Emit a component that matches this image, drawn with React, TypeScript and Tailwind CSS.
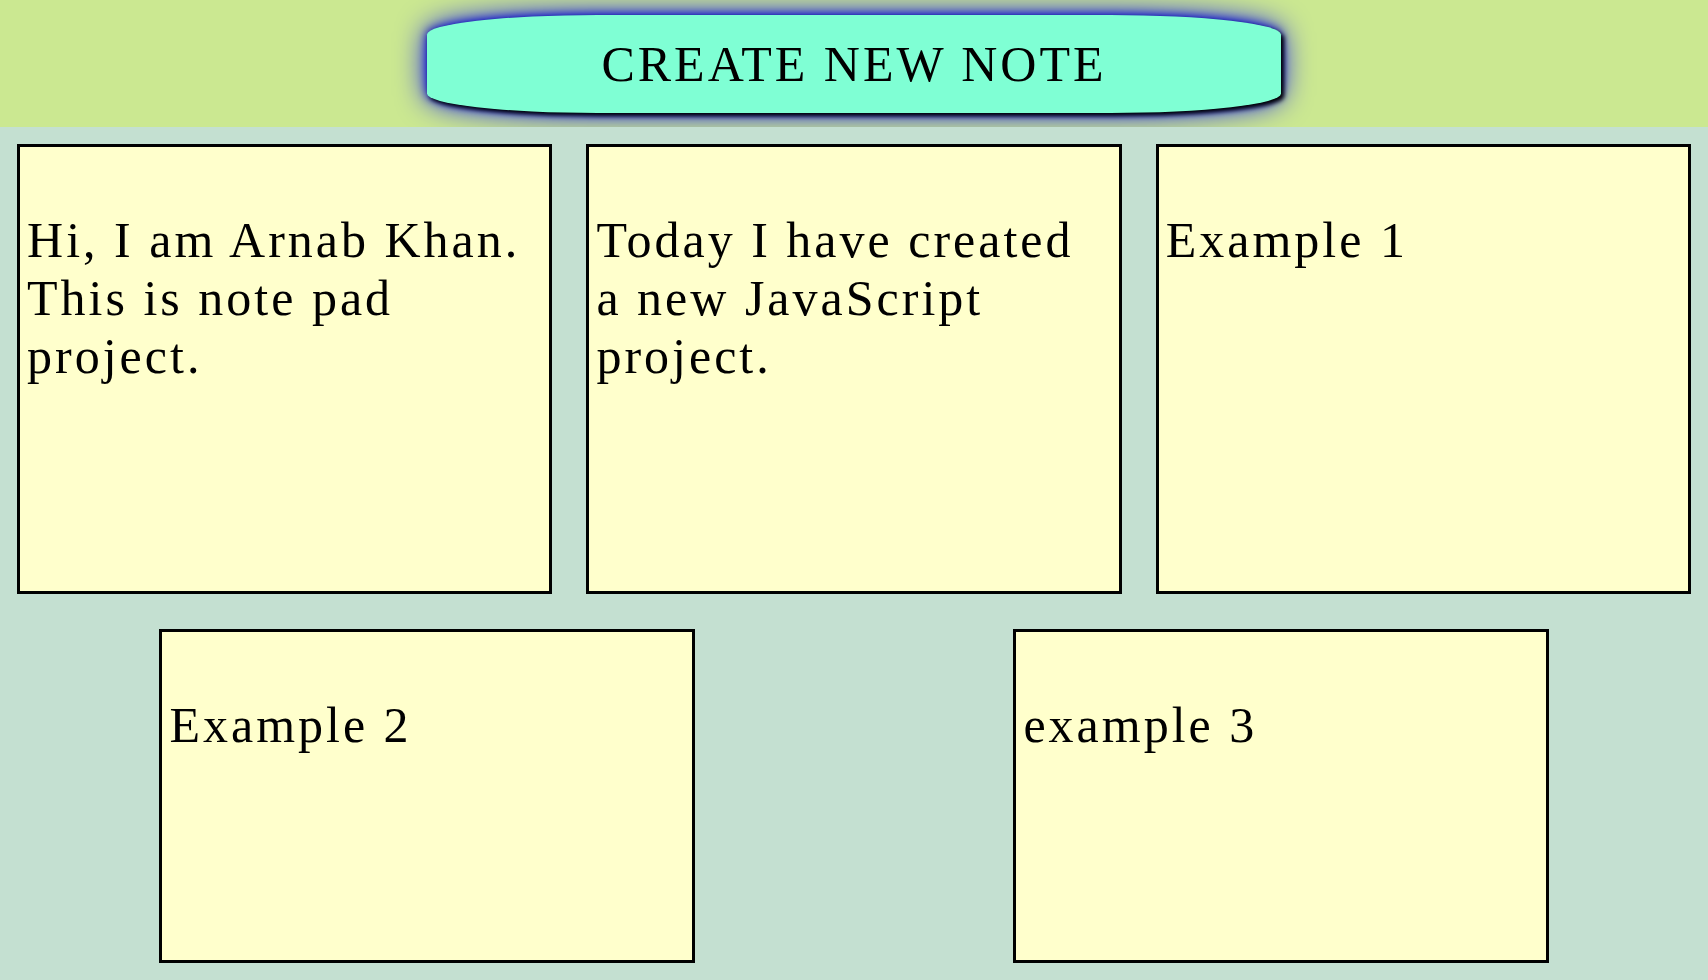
const notes: string[] = [
  "Hi, I am Arnab Khan. This is note pad project.",
  "Today I have created a new JavaScript project.",
  "Example 1",
  "Example 2",
  "example 3",
];

function Note({ text }: { text: string }) {
  return (
    <li className="m-[1vw] w-[calc(100%/3-2vw)] border-3 border-black bg-[#ffffcc] px-[7px] py-16">
      <p>{text}</p>
    </li>
  );
}

export default function App() {
  return (
    <div className="flex min-h-screen flex-col bg-[#c4e0d1] font-['Times_New_Roman','Liberation_Serif',serif] text-[50px] leading-[58px] tracking-[3px] text-black">
      <header className="flex justify-center bg-[#cbe891] pt-[15px] pb-[14px]">
        <button
          type="button"
          className="w-1/2 cursor-pointer rounded-[20%] bg-[#7fffd4] py-5 tracking-[3px] shadow-[3px_3px_4px_black,0_0_30px_blue,0_0_10px_darkblue]"
        >
          CREATE NEW NOTE
        </button>
      </header>
      <main className="flex grow flex-col bg-[#c4e0d1]">
        <ul className="flex grow flex-wrap justify-around">
          {notes.map((text) => (
            <Note key={text} text={text} />
          ))}
        </ul>
      </main>
    </div>
  );
}
